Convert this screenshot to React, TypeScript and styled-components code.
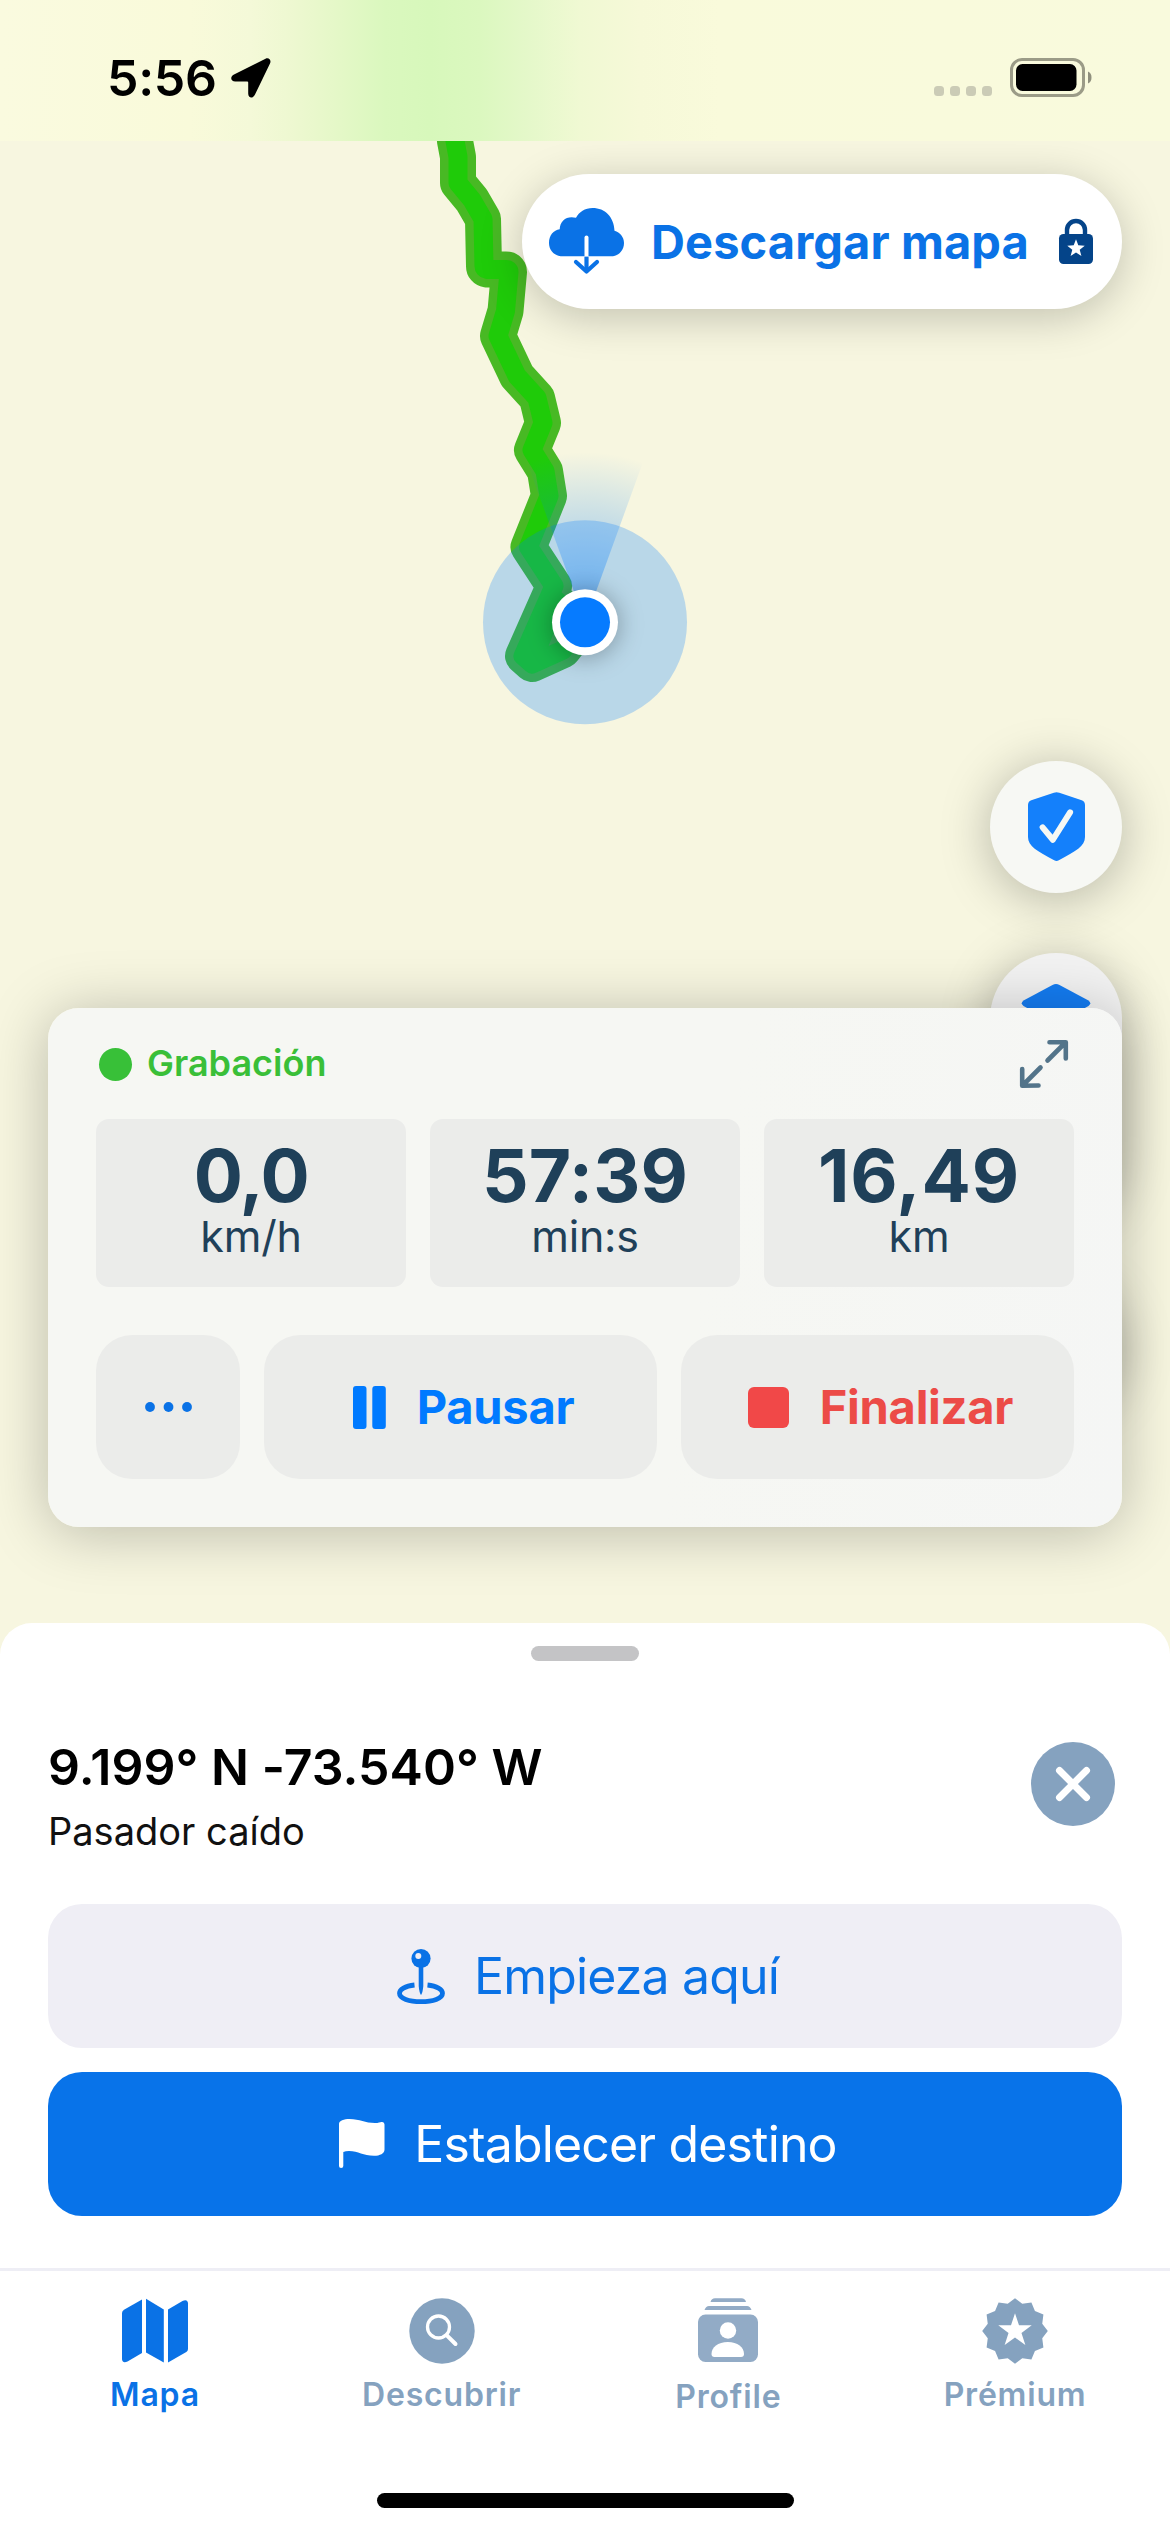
import React from "react";
import styled, { createGlobalStyle } from "styled-components";

const BLUE = "#0a72e6";
const MUTED = "#85a2bf";
const NAVY = "#1f4059";

const GlobalStyle = createGlobalStyle`
  * { box-sizing: border-box; }
  html, body { margin: 0; padding: 0; }
  body { font-family: Inter, "Liberation Sans", sans-serif; background: #f7f6e0; }
  button { font: inherit; border: 0; padding: 0; margin: 0; background: none; }
  svg { display: block; flex: none; overflow: visible; }
`;

const Screen = styled.div`
  width: 1170px;
  height: 2532px;
  display: flex;
  flex-direction: column;
  overflow: hidden;
  background: #f7f6e0;
`;

/* ---------- status bar ---------- */

const StatusBar = styled.header`
  position: relative;
  z-index: 3;
  height: 141px;
  flex: none;
  display: flex;
  justify-content: space-between;
  align-items: flex-start;
  padding: 48px 78px 0 107px;
  background: linear-gradient(
    90deg,
    #fafadf 0,
    #f9fada 190px,
    #f4f9d8 250px,
    #eef8d1 290px,
    #e4f8c7 340px,
    #daf8be 385px,
    #d7f8bb 430px,
    #dbf8bf 480px,
    #e5f8ca 530px,
    #f0f9d3 580px,
    #f6f9d8 640px,
    #f9fadb 720px,
    #f9fadd 1170px
  );
`;

const Clock = styled.div`
  display: flex;
  align-items: center;
  gap: 14px;
  font-size: 50px;
  line-height: 60px;
  font-weight: 600;
  letter-spacing: -0.3px;
  color: #000;
`;

const StatusIcons = styled.div`
  display: flex;
  align-items: flex-end;
  gap: 18px;
  padding-top: 10px;
`;

const SignalDots = styled.div`
  display: flex;
  gap: 6px;
  padding-bottom: 1px;
`;

const SignalDot = styled.span`
  width: 10px;
  height: 10px;
  border-radius: 3.5px;
  background: #cbcbb6;
`;

/* ---------- map ---------- */

const MapArea = styled.main`
  position: relative;
  height: 1482px;
  flex: none;
`;

const MapCanvas = styled.svg`
  position: absolute;
  inset: 0;
`;

const FloatingControls = styled.div`
  position: relative;
  display: flex;
  flex-direction: column;
  align-items: flex-end;
  gap: 60px;
  padding: 33px 48px 0 0;
`;

const DownloadButton = styled.button`
  width: 600px;
  height: 135px;
  margin-bottom: 392px;
  display: flex;
  align-items: center;
  padding: 0 29px 0 27px;
  border-radius: 68px;
  background: #fff;
  box-shadow: 0 8px 44px rgba(0, 0, 0, 0.22);
`;

const DownloadLabel = styled.span`
  flex: 1;
  padding-left: 27px;
  text-align: left;
  white-space: nowrap;
  font-size: 47px;
  line-height: 60px;
  font-weight: 700;
  letter-spacing: 0.1px;
  color: ${BLUE};
`;

const RoundButton = styled.button<{ $tall?: boolean }>`
  width: 132px;
  height: ${(p) => (p.$tall ? 264 : 132)}px;
  border-radius: 66px;
  display: flex;
  justify-content: center;
  align-items: flex-start;
  padding-top: 31px;
  background: ${(p) => (p.$tall ? "#f2f2f2" : "#f7f8f4")};
  box-shadow: 0 6px 50px rgba(0, 0, 0, 0.27);
`;

/* ---------- recording card ---------- */

const RecordingCard = styled.section`
  position: absolute;
  left: 48px;
  right: 48px;
  bottom: 96px;
  height: 519px;
  padding: 32px 48px 48px;
  display: flex;
  flex-direction: column;
  border-radius: 31px;
  background: linear-gradient(100deg, #f6f7f3 60%, #f5f6f5 100%);
  box-shadow: 0 5px 60px rgba(0, 0, 0, 0.25);
`;

const CardHeader = styled.div`
  height: 48px;
  display: flex;
  justify-content: space-between;
  align-items: center;
  padding: 0 6px 0 3px;
`;

const RecordingState = styled.div`
  display: flex;
  align-items: center;
  gap: 15px;
  font-size: 36px;
  line-height: 46px;
  font-weight: 600;
  letter-spacing: 0;
  color: #3abf38;
`;

const RecordingDot = styled.span`
  width: 33px;
  height: 33px;
  border-radius: 50%;
  background: #38c038;
`;

const RecordingLabel = styled.span`
  padding-bottom: 2px;
`;

const Stats = styled.div`
  display: grid;
  grid-template-columns: repeat(3, 1fr);
  gap: 24px;
  margin-top: 31px;
`;

const Stat = styled.div`
  height: 168px;
  border-radius: 13px;
  background: #ebecea;
  color: ${NAVY};
  display: flex;
  flex-direction: column;
  align-items: center;
  padding-top: 14px;
`;

const StatValue = styled.span<{ $spacing: number }>`
  font-size: 73px;
  line-height: 86px;
  font-weight: 700;
  letter-spacing: ${(p) => p.$spacing}px;
`;

const StatUnit = styled.span`
  font-size: 43px;
  line-height: 34px;
  font-weight: 400;
  letter-spacing: -0.2px;
`;

const Actions = styled.div`
  display: grid;
  grid-template-columns: 144px 1fr 1fr;
  gap: 24px;
  margin-top: 48px;
`;

const ActionButton = styled.button<{ $color: string; $labelled?: boolean }>`
  height: 144px;
  border-radius: 36px;
  background: #ebecea;
  color: ${(p) => p.$color};
  display: flex;
  justify-content: center;
  align-items: center;
  gap: 31px;
  padding-left: ${(p) => (p.$labelled ? 6 : 0)}px;
  font-size: 47px;
  line-height: 60px;
  font-weight: 700;
  letter-spacing: -0.25px;
`;

/* ---------- sheet ---------- */

const Sheet = styled.section`
  position: relative;
  z-index: 2;
  height: 645px;
  flex: none;
  display: flex;
  flex-direction: column;
  padding: 23px 48px 0;
  border-radius: 32px 32px 0 0;
  background: #fff;
`;

const Grabber = styled.div`
  align-self: center;
  width: 108px;
  height: 15px;
  border-radius: 8px;
  background: #c4c4c6;
`;

const PlaceHeader = styled.div`
  display: flex;
  justify-content: space-between;
  align-items: flex-start;
  margin-top: 76px;
  padding-right: 7px;
  height: 167px;
`;

const PlaceTitle = styled.h1`
  margin: 0;
  font-size: 50px;
  line-height: 60px;
  font-weight: 600;
  letter-spacing: 0.05px;
  color: #000;
`;

const PlaceSubtitle = styled.p`
  margin: 11px 0 0;
  font-size: 38px;
  line-height: 46px;
  color: #111;
`;

const CloseButton = styled.button`
  width: 84px;
  height: 84px;
  margin-top: 5px;
  border-radius: 50%;
  display: grid;
  place-items: center;
  background: ${MUTED};
`;

const SheetButton = styled.button<{ $primary?: boolean }>`
  height: 144px;
  flex: none;
  border-radius: 34px;
  display: flex;
  justify-content: center;
  align-items: center;
  gap: 29px;
  padding-left: 6px;
  font-size: 50px;
  line-height: 60px;
  font-weight: 400;
  letter-spacing: -0.85px;
  color: ${(p) => (p.$primary ? "#fff" : BLUE)};
  background: ${(p) => (p.$primary ? "#0873e9" : "#efeef5")};
  & + & { margin-top: 24px; }
`;

/* ---------- tab bar ---------- */

const TabBar = styled.nav`
  position: relative;
  z-index: 2;
  flex: 1;
  display: flex;
  flex-direction: column;
  align-items: center;
  border-top: 3px solid #eeeef5;
  background: #fff;
`;

const Tabs = styled.div`
  align-self: stretch;
  height: 222px;
  display: grid;
  grid-template-columns: repeat(4, 286.7px);
  justify-content: center;
  padding-top: 27px;
`;

const Tab = styled.button<{ $active?: boolean; $drop?: number }>`
  display: flex;
  flex-direction: column;
  align-items: center;
  gap: ${(p) => 11 + (p.$drop ?? 0)}px;
  align-self: start;
  font-size: 32px;
  line-height: 40px;
  font-weight: 600;
  letter-spacing: 0.8px;
  color: ${(p) => (p.$active ? BLUE : MUTED)};
`;

const HomeIndicator = styled.div`
  width: 417px;
  height: 15px;
  border-radius: 8px;
  background: #000;
`;

/* ---------- drawings ---------- */

function spikes(cx: number, cy: number, n: number, outer: number, inner: number) {
  return Array.from({ length: n * 2 }, (_, i) => {
    const r = i % 2 ? inner : outer;
    const a = (Math.PI * i) / n - Math.PI / 2;
    return `${(cx + r * Math.cos(a)).toFixed(2)},${(cy + r * Math.sin(a)).toFixed(2)}`;
  }).join(" ");
}

const TRAIL =
  "M450 90 L455 141 L458 157 V183 L472 200 L483 219 L484 266 Q484 269 487 269.500 H506 Q509 269.500 509 272 L505.500 311 L498 336 L517 376 L537 398 L543 423 L532 450 L545 471 L549 496 L528.500 547 L554 586 L523 656 L532 664 L563 650 L580 628 L556 600 L533 660";

const LocationArrow = () => (
  <svg width="40" height="40" viewBox="0 0 40 40">
    <path
      d="M34.500.700 3 16.500C-1.300 18.700-.400 23.600 4.300 23.600H16.200Q17.200 23.600 17.200 24.600V35.500C17.200 40.500 22 41 24 36.500L39 5.500C40.600 2 38 -.800 34.500.700Z"
      fill="#000"
    />
  </svg>
);

const Battery = () => (
  <svg width="82" height="39" viewBox="0 0 82 39">
    <rect x="1.500" y="1.500" width="72" height="36" rx="10.500" fill="none" stroke="#9b9b87" strokeWidth="3" />
    <rect x="6" y="6" width="60.500" height="27" rx="6.500" fill="#000" />
    <path d="M78 13.500C82.700 15 82.700 24 78 25.500Z" fill="#8f8f7d" />
  </svg>
);

const CloudDownload = () => (
  <svg width="75" height="67" viewBox="0 0 75 67">
    <path
      d="M14 48.300C5 48.300 0 42 0 35C0 27.500 4.500 22 10.700 21.300C11 14 16 9.300 22.600 9.300C24 9.300 25.500 9.500 27 9.800C30 4 36 0 43.600 0C56 0 65 9 65.500 22.800C71 24.500 75 29 75 35C75 43 69 48.300 62 48.300Z"
      fill={BLUE}
    />
    <path d="M37.500 29.500V48.300" stroke="#fff" strokeWidth="4" strokeLinecap="round" />
    <path d="M37.500 48.600V63" stroke={BLUE} strokeWidth="4.200" />
    <path d="M27 54 37.500 63.500 48 54" fill="none" stroke={BLUE} strokeWidth="4.200" strokeLinecap="round" strokeLinejoin="round" />
  </svg>
);

const LockStar = () => (
  <svg width="34" height="45" viewBox="0 0 34 45">
    <path d="M8 18V11a9 9 0 0 1 18 0V18" fill="none" stroke="#044489" strokeWidth="4.400" />
    <rect y="15" width="34" height="30" rx="4.500" fill="#044489" />
    <polygon points={spikes(17, 29.500, 5, 9.200, 3.900)} fill="#fff" />
  </svg>
);

const ShieldCheck = () => (
  <svg width="57" height="70" viewBox="0 0 57.300 70">
    <path
      d="M26 .600Q28.700-.600 31.500.600L54 8.200Q57.300 9.500 57.300 13V45C57.300 54.500 48 59 31 68.500Q28.700 69.800 26.300 68.500C9.300 59 0 54.500 0 45V13Q0 9.500 3.300 8.200Z"
      fill="#1480fb"
    />
    <path d="M14.700 35.300 25 47.800 42.300 20.300" fill="none" stroke="#f6f8f4" strokeWidth="6" strokeLinecap="round" strokeLinejoin="round" />
  </svg>
);

const Layers = () => (
  <svg width="70" height="70" viewBox="0 0 70 70">
    <path d="M31.500.900Q35-.800 38.500.900L67.500 16.500Q71 19.300 67.500 22L38.500 38Q35 39.500 31.500 38L2.500 22Q-1 19.300 2.500 16.500Z" fill="#147cf2" />
    <path d="M3 36 35 53 67 36" fill="none" stroke="#147cf2" strokeWidth="7" strokeLinecap="round" strokeLinejoin="round" />
  </svg>
);

const Expand = () => (
  <svg width="48" height="48" viewBox="0 0 48 48" fill="none" stroke="#53748a" strokeWidth="4.600" strokeLinecap="round" strokeLinejoin="round">
    <path d="M29.500 2.200H45.800V18.500M45 3 27.500 20.500" />
    <path d="M18.500 45.500 2.200 45.800V29M3 45 20.500 27.500" />
  </svg>
);

const Dots = () => (
  <svg width="47" height="10" viewBox="0 0 47 10" fill={BLUE}>
    <circle cx="5" cy="5" r="4.900" />
    <circle cx="23.500" cy="5" r="4.900" />
    <circle cx="42" cy="5" r="4.900" />
  </svg>
);

const Pause = () => (
  <svg width="33" height="43" viewBox="0 0 33 43" fill="currentColor">
    <rect width="13.500" height="43" rx="3" />
    <rect x="19.300" width="13.500" height="43" rx="3" />
  </svg>
);

const Stop = () => (
  <svg width="41" height="41" viewBox="0 0 41 41">
    <rect width="41" height="41" rx="6" fill="#f14848" />
  </svg>
);

const Cross = () => (
  <svg width="34" height="34" viewBox="0 0 34 34">
    <path d="M3.500 3.500 30.500 30.500M30.500 3.500 3.500 30.500" stroke="#fff" strokeWidth="7" strokeLinecap="round" />
  </svg>
);

const DropPin = () => (
  <svg width="48" height="55" viewBox="0 0 48 55">
    <path d="M17.500 36C8 37 2.500 40.500 2.500 44.200C2.500 49.500 12 52.700 24 52.700S45.500 49.500 45.500 44.200C45.500 40.500 40 37 30.500 36" fill="none" stroke={BLUE} strokeWidth="4.800" />
    <path d="M21.700 17H26.300V37Q25.800 43.500 24 46Q22.200 43.500 21.700 37Z" fill={BLUE} />
    <circle cx="24" cy="9.500" r="9.600" fill={BLUE} />
    <circle cx="21.300" cy="7" r="3" fill="#efeef5" />
  </svg>
);

const Flag = () => (
  <svg width="46" height="50" viewBox="0 0 46 50">
    <path
      d="M0 5C0 1.500 5 0 10.500 0C21 0 26 4 36 4C39.500 4 41 3.300 42.500 3Q45.500 2.500 45.500 5.500V30.500C45.500 34.500 41 36.800 35 36.800C24 36.800 19.500 32 10 32Q6.500 32 4.300 33V47Q4.300 49 2.150 49Q0 49 0 47Z"
      fill="#fff"
    />
  </svg>
);

const MapIcon = () => (
  <svg width="66" height="66" viewBox="0 0 66 66" fill={BLUE}>
    <path d="M0 15Q0 13 2 11.800L20 1.500V55L5.500 63.500C2 65 0 64 0 61Z" />
    <path d="M24 .800 41.800 11.500V64.500L24 54.500Z" />
    <path d="M46 11.500 60.500 3C64 1.200 66 2.500 66 5.500V51Q66 53 64.300 54L46 64.500Z" />
  </svg>
);

const Discover = () => (
  <svg width="66" height="66" viewBox="0 0 66 66">
    <circle cx="33" cy="33" r="32.700" fill={MUTED} />
    <circle cx="29.500" cy="29" r="11" fill="none" stroke="#fff" strokeWidth="3.300" />
    <path d="M37.800 37.300 46.500 46" stroke="#fff" strokeWidth="4" strokeLinecap="round" />
  </svg>
);

const ProfileIcon = () => (
  <svg width="60" height="66" viewBox="0 0 60 66">
    <path d="M12.500 4Q13.500 .300 17 .300H43.500Q47 .300 48 4ZM6.500 12Q8 8 11 8H49Q52 8 53.500 12Z" fill="#92abc6" />
    <rect y="16.500" width="60" height="47.500" rx="7.500" fill="#92abc6" />
    <circle cx="30" cy="32.500" r="8.200" fill="#fff" />
    <path d="M13.500 56C13.500 49 20 44 29.800 44S46 49 46 56Q46 59 43 59H16.500Q13.500 59 13.500 56Z" fill="#fff" />
  </svg>
);

const PremiumIcon = () => (
  <svg width="66" height="66" viewBox="0 0 66 66">
    <polygon points={spikes(33, 33, 12, 32.800, 28.200)} fill={MUTED} />
    <polygon points={spikes(33, 32.800, 5, 17.600, 6.800)} fill="#fff" />
  </svg>
);

const stats = [
  { value: "0,0", unit: "km/h", spacing: -1.3 },
  { value: "57:39", unit: "min:s", spacing: 0.1 },
  { value: "16,49", unit: "km", spacing: 0.8 },
];

const tabs = [
  { label: "Mapa", icon: <MapIcon />, active: true },
  { label: "Descubrir", icon: <Discover /> },
  { label: "Profile", icon: <ProfileIcon />, drop: 2 },
  { label: "Prémium", icon: <PremiumIcon /> },
];

export default function App() {
  return (
    <>
      <GlobalStyle />
      <Screen>
        <StatusBar>
          <Clock>
            5:56
            <LocationArrow />
          </Clock>
          <StatusIcons>
            <SignalDots>
              {[0, 1, 2, 3].map((i) => (
                <SignalDot key={i} />
              ))}
            </SignalDots>
            <Battery />
          </StatusIcons>
        </StatusBar>

        <MapArea>
          <MapCanvas width="1170" height="1482" viewBox="0 141 1170 1482">
            <defs>
              <radialGradient id="beam" gradientUnits="userSpaceOnUse" cx="585" cy="622" r="170">
                <stop offset="0.15" stopColor="#007aff" stopOpacity="0.38" />
                <stop offset="0.6" stopColor="#007aff" stopOpacity="0.2" />
                <stop offset="1" stopColor="#007aff" stopOpacity="0" />
              </radialGradient>
              <filter id="soft" x="-60%" y="-60%" width="220%" height="220%">
                <feGaussianBlur stdDeviation="12" />
              </filter>
            </defs>
            <g fill="none" strokeLinejoin="round" strokeLinecap="round">
              <path d={TRAIL} stroke="#48b924" strokeWidth="36" />
              <path d={TRAIL} stroke="#1fcb09" strokeWidth="19" />
            </g>
            <path d="M585 622 527 462A170 170 0 0 1 643 462Z" fill="url(#beam)" />
            <circle cx="585" cy="622.300" r="102" fill="#007aff" fillOpacity="0.25" />
            <circle cx="585" cy="624" r="34" fill="#000" fillOpacity="0.3" filter="url(#soft)" />
            <circle cx="585" cy="622.300" r="33" fill="#fff" />
            <circle cx="585" cy="622.300" r="25" fill="#067bff" />
          </MapCanvas>

          <FloatingControls>
            <DownloadButton>
              <CloudDownload />
              <DownloadLabel>Descargar mapa</DownloadLabel>
              <LockStar />
            </DownloadButton>
            <RoundButton>
              <ShieldCheck />
            </RoundButton>
            <RoundButton $tall>
              <Layers />
            </RoundButton>
            <RoundButton />
          </FloatingControls>

          <RecordingCard>
            <CardHeader>
              <RecordingState>
                <RecordingDot />
                <RecordingLabel>Grabación</RecordingLabel>
              </RecordingState>
              <Expand />
            </CardHeader>
            <Stats>
              {stats.map((s) => (
                <Stat key={s.unit}>
                  <StatValue $spacing={s.spacing}>{s.value}</StatValue>
                  <StatUnit>{s.unit}</StatUnit>
                </Stat>
              ))}
            </Stats>
            <Actions>
              <ActionButton $color={BLUE}>
                <Dots />
              </ActionButton>
              <ActionButton $color="#007aff" $labelled>
                <Pause />
                Pausar
              </ActionButton>
              <ActionButton $color="#ec4b47" $labelled>
                <Stop />
                Finalizar
              </ActionButton>
            </Actions>
          </RecordingCard>
        </MapArea>

        <Sheet>
          <Grabber />
          <PlaceHeader>
            <div>
              <PlaceTitle>9.199° N -73.540° W</PlaceTitle>
              <PlaceSubtitle>Pasador caído</PlaceSubtitle>
            </div>
            <CloseButton>
              <Cross />
            </CloseButton>
          </PlaceHeader>
          <SheetButton>
            <DropPin />
            Empieza aquí
          </SheetButton>
          <SheetButton $primary>
            <Flag />
            Establecer destino
          </SheetButton>
        </Sheet>

        <TabBar>
          <Tabs>
            {tabs.map((t) => (
              <Tab key={t.label} $active={t.active} $drop={t.drop}>
                {t.icon}
                {t.label}
              </Tab>
            ))}
          </Tabs>
          <HomeIndicator />
        </TabBar>
      </Screen>
    </>
  );
}
